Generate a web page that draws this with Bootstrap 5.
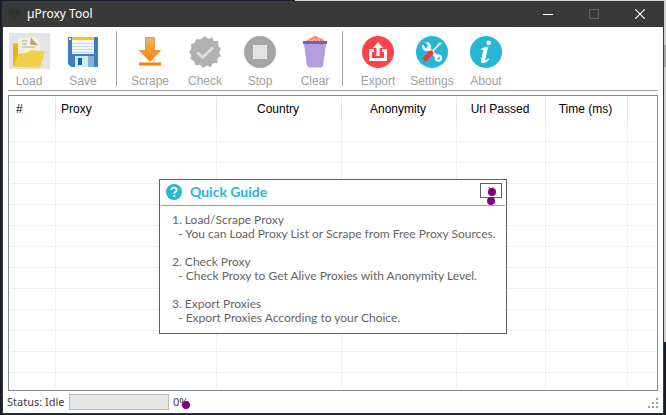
<!DOCTYPE html>
<html lang="en">
<head>
<meta charset="utf-8">
<meta name="viewport" content="width=device-width, initial-scale=1">
<title>µProxy Tool</title>
<link href="https://cdn.jsdelivr.net/npm/bootstrap@5.3.0/dist/css/bootstrap.min.css" rel="stylesheet">
<style>
  body {
    padding: 1px 2px;
    background:
      linear-gradient(90deg, #1a2232 295px, #d3d6d6 295px) top / 100% 1px no-repeat,
      linear-gradient(#d0d0d0 45px, #a8a8a8 45px 67px, #d0d0d0 67px 342px, #18202c 342px) right / 2px 100% no-repeat,
      #18202c;
    font-family: "Liberation Sans", Arial, sans-serif;
    font-size: 12px;
    line-height: 14px;
  }
  .app-window { border: 1px solid #393939; border-top: 0; background: #fff; }
  .title-bar { height: 26px; background: #393939; color: #fff; font-family: "Noto Sans", sans-serif; line-height: 16px; }
  .title-bar .globe { margin: 0 5px 0 4px; }
  .win-btn { width: 46px; height: 26px; border: 0; background: none; }
  .tools { padding-top: 4px; height: 59px; }
  .group-file { padding: 0 8px 0 1px; gap: 4px; }
  .group-run { padding: 0 2px 0 8px; gap: 5px; }
  .group-app { padding-left: 10px; gap: 4px; }
  .tool-btn { width: 50px; padding: 2px 0 0; border: 0; background: none; color: #a0a0a0; }
  .tool-btn .pic { width: 41px; height: 36px; margin-bottom: 5px; padding-top: 2px; }
  .tool-btn .pic.active { background: #e3e3e3; }
  .tool-rule { width: 1px; height: 55px; background: #a0a0a0; }
  .frame { margin: 0 5px; }
  .rule { border-top: 1px solid #a0a0a0; }
  .list-panel { margin-top: 4px; border: 1px solid #828790; padding: 1px; min-height: 0; }
  .clip { height: 100%; overflow: hidden; }
  .proxies { width: 100%; table-layout: fixed; border-collapse: separate; border-spacing: 0; color: #000; }
  .proxies th { height: 24px; padding: 0 7px 0 5px; font-weight: 400; text-align: center; border-right: 1px solid #e5e5e5; }
  .proxies th:first-child { padding-left: 6px; }
  .proxies td { height: 21px; padding: 0; border-right: 1px solid #efefef; border-bottom: 1px solid #efefef; }
  .proxies th:last-child, .proxies td:last-child { border-right: 0; }
  .guide { top: 83px; width: 348px; height: 155px; border: 1px solid #606060; background: #fff; color: #646464; font-family: Lato, sans-serif; }
  .guide header { height: 26px; margin: 0 1px; padding: 0 3px 1px 5px; border-bottom: 1px solid #a0a0a0; }
  .guide h1 { font-size: 14px; line-height: 16px; font-weight: 700; color: #28b6d6; }
  .close-btn { width: 22px; height: 15px; border: 1px solid #606060; background: #fff; margin-bottom: 4px; }
  .steps { padding: 7px 4px 7px 12px; white-space: pre-wrap; }
  .dot { width: 8px; height: 8px; border-radius: 50%; background: #800080; }
  .dot-a { top: 4px; left: 7px; }
  .dot-b { top: 13px; left: 6px; }
  .dot-c { top: 6px; left: 9px; }
  .status { height: 22px; padding: 0 4px; color: #404040; font-family: "Noto Sans", sans-serif; font-size: 11px; }
  .idle { width: 62px; }
  .meter { width: 100px; height: 16px; border: 1px solid #bcbcbc; border-radius: 0; background: #e6e6e6; }
</style>
<script src="https://cdn.jsdelivr.net/npm/bootstrap@5.3.0/dist/js/bootstrap.bundle.min.js"></script>
</head>
<body class="vh-100 m-0 overflow-hidden">
<div class="app-window d-flex flex-column h-100">
  <div class="title-bar d-flex align-items-center">
    <svg class="globe" width="15" height="15" viewBox="0 0 15 15" fill="#323232" stroke="#303030" stroke-width=".6"><circle cx="7.500" cy="7.500" r="6.800" fill="none" stroke-dasharray="2 1"/><path d="M3 3l3-1 1 2-2 1-1 3-2-1zM9 3l3 1 1 3-3 1-2-2zM6 8l3 2-1 4-3-3z"/></svg>
    <span>µProxy Tool</span>
    <div class="ms-auto d-flex">
      <button class="win-btn p-0 d-flex align-items-center justify-content-center" aria-label="Minimize"><svg width="10" height="10"><path d="M0 5.500h10" stroke="#fff"/></svg></button>
      <button class="win-btn p-0 d-flex align-items-center justify-content-center" aria-label="Maximize"><svg width="10" height="10"><path d="M.5.500h9v9h-9z" fill="none" stroke="#666"/></svg></button>
      <button class="win-btn p-0 d-flex align-items-center justify-content-center" aria-label="Close"><svg width="10" height="10"><path d="M.3.300l9.400 9.400M9.700.300L.3 9.700" stroke="#fff" stroke-width="1.200"/></svg></button>
    </div>
  </div>

  <div class="tools d-flex align-items-start">
    <div class="group-file d-flex">
      <button class="tool-btn d-flex flex-column align-items-center"><span class="pic active d-flex align-items-center justify-content-center">
        <svg width="32" height="33" viewBox="0 1 32 33"><path d="M0 8.500h5l2 2h18v21H0z" fill="#ecb211"/><path d="M5 3l17-1 5 5v15H5z" fill="#f4efe2"/><path d="M18 2.500l7 8-8-1z" fill="#b9a171"/><path d="M9 6h5M9 9h5M9 12h13" stroke="#b5aa96" fill="none"/><path d="M5.500 19l9-1.500L18 15l14 1.500-4 13-2 3L0 31.500z" fill="#f0cf4b"/></svg></span>Load</button>
      <button class="tool-btn d-flex flex-column align-items-center"><span class="pic d-flex align-items-center justify-content-center">
        <svg width="30" height="32" viewBox="0 0 30 32"><path d="M0 1h30v30H3l-3-3z" fill="#3f7fbd"/><path d="M4 4h22v14H4z" fill="#f4f6fa"/><path d="M4 1h22v3H4z" fill="#ffc400"/><path d="M4 7.500h22M4 13.500h22" stroke="#e9d9a4"/><path d="M4 10.500h22M4 16.500h22" stroke="#bcd8f2"/><path d="M1 2h2v2H1z" fill="#e8f2ff"/><path d="M7 20h19v11H7z" fill="#cfeaea"/><path d="M20 20h6v11h-6z" fill="#8ab2d4"/><path d="M10 22h4v7h-4z" fill="#1f64a8"/></svg></span>Save</button>
    </div>
    <div class="tool-rule"></div>
    <div class="group-run d-flex">
      <button class="tool-btn d-flex flex-column align-items-center"><span class="pic d-flex align-items-center justify-content-center">
        <svg width="24" height="32" viewBox="0 0 24 32"><defs><linearGradient id="og" x2="0" y2="1"><stop stop-color="#f7b26a"/><stop offset="1" stop-color="#f58200"/></linearGradient></defs><path d="M7.500 1.500h9v13h6L12 25.500 1.500 14.500h6z" fill="url(#og)" stroke="#d98a35" stroke-width=".8"/><path d="M1 26.500h22V29.500H1z" fill="#f58200"/></svg></span>Scrape</button>
      <button class="tool-btn d-flex flex-column align-items-center"><span class="pic d-flex align-items-center justify-content-center">
        <svg width="32" height="32" viewBox="0 0 32 32"><path d="M16 0l3 3 4-1.800 1.800 3.700 4.500.1-.2 4.500L32 13l-2 3.500 2 3.500-3.500 2.500-.2 4.500-4.300.2L21.500 31 17.500 29.500 14 32l-3-3.200-4.500.7-1.300-4.200L1.300 23l1-4L0 16l2.500-3.500L1.600 8.500l4-1.700L7.500 3 11.700 3.400z" fill="#b1b1b1"/><path d="M8.500 16.500l5 5L24 11.500" fill="none" stroke="#dedede" stroke-width="3"/></svg></span>Check</button>
      <button class="tool-btn d-flex flex-column align-items-center"><span class="pic d-flex align-items-center justify-content-center">
        <svg width="32" height="32" viewBox="0 0 32 32"><circle cx="16" cy="16" r="16" fill="#a6a6a6"/><path d="M9 9h14v14H9z" fill="#e2e2e2"/></svg></span>Stop</button>
      <button class="tool-btn d-flex flex-column align-items-center"><span class="pic d-flex align-items-center justify-content-center">
        <svg width="24" height="32" viewBox="0 0 24 32"><path d="M2 6l4-3.500L9 1.500l3-2 4 2.500 3 .5L22 6z" fill="#f28c6a"/><path d="M5 4l2-1M10 3l2 1M15 3.500l2 1M8 5l2-.5M13 5.500l1-2" stroke="#ffd5b5"/><path d="M1 8h22l-3 22-2 1.500H6L4 30z" fill="#b39ddb"/><path d="M0 5h24v3H0z" fill="#7e57c2"/></svg></span>Clear</button>
    </div>
    <div class="tool-rule"></div>
    <div class="group-app d-flex">
      <button class="tool-btn d-flex flex-column align-items-center"><span class="pic d-flex align-items-center justify-content-center">
        <svg width="32" height="32" viewBox="0 0 32 32"><circle cx="16" cy="16" r="16" fill="#fc4349"/><path d="M12 14.500H8.500v9h15v-9H20" fill="none" stroke="#fff" stroke-width="3"/><path d="M16 6l5 6h-3.400v8h-3.200v-8H11z" fill="#fff"/></svg></span>Export</button>
      <button class="tool-btn d-flex flex-column align-items-center"><span class="pic d-flex align-items-center justify-content-center">
        <svg width="32" height="32" viewBox="0 0 32 32"><circle cx="16" cy="16" r="16" fill="#28b6d6"/><path d="M11 11l11 11" stroke="#f5f5f5" stroke-width="3.400"/><circle cx="10.500" cy="10.500" r="3.200" fill="none" stroke="#f5f5f5" stroke-width="2.600"/><path d="M5 7l3-3 3.500 5-2 2z" fill="#28b6d6"/><circle cx="22.500" cy="22" r="2.600" fill="none" stroke="#f5f5f5" stroke-width="2.200"/><path d="M15 17l7.500-8" stroke="#f5f5f5" stroke-width="1.800"/><path d="M21 9l3-3 1.500 1.500-3 3z" fill="#f5f5f5"/><path d="M9.500 22.500L15 17" stroke="#e23c40" stroke-width="5" stroke-linecap="round"/></svg></span>Settings</button>
      <button class="tool-btn d-flex flex-column align-items-center"><span class="pic d-flex align-items-center justify-content-center">
        <svg width="32" height="32" viewBox="0 0 32 32"><circle cx="16" cy="16" r="16" fill="#28b6d6"/><circle cx="18.700" cy="6.700" r="2.300" fill="#fff"/><path d="M11 13c2-1.500 5-2.500 7.500-2.500L15.300 23c-.4 1.800.8 1.600 3.500-.7l.5.900c-2.500 2.800-4.600 3.900-6.400 3.900-2 0-2.500-1.300-1.900-3.600l2.400-9c.3-1-.7-.9-2.200-.6z" fill="#fff"/></svg></span>About</button>
    </div>
  </div>

  <div class="frame flex-grow-1 d-flex flex-column overflow-hidden">
    <div class="rule mt-1"></div>
    <div class="list-panel flex-grow-1 position-relative">
      <div class="clip">
        <table class="proxies">
          <colgroup><col style="width:46px"><col style="width:161px"><col style="width:125px"><col style="width:115px"><col style="width:89px"><col style="width:82px"><col></colgroup>
          <thead><tr><th class="text-start">#</th><th class="text-start">Proxy</th><th>Country</th><th>Anonymity</th><th>Url Passed</th><th>Time (ms)</th><th></th></tr></thead>
          <tbody>
            <tr><td></td><td></td><td></td><td></td><td></td><td></td><td></td></tr>
            <tr><td></td><td></td><td></td><td></td><td></td><td></td><td></td></tr>
            <tr><td></td><td></td><td></td><td></td><td></td><td></td><td></td></tr>
            <tr><td></td><td></td><td></td><td></td><td></td><td></td><td></td></tr>
            <tr><td></td><td></td><td></td><td></td><td></td><td></td><td></td></tr>
            <tr><td></td><td></td><td></td><td></td><td></td><td></td><td></td></tr>
            <tr><td></td><td></td><td></td><td></td><td></td><td></td><td></td></tr>
            <tr><td></td><td></td><td></td><td></td><td></td><td></td><td></td></tr>
            <tr><td></td><td></td><td></td><td></td><td></td><td></td><td></td></tr>
            <tr><td></td><td></td><td></td><td></td><td></td><td></td><td></td></tr>
            <tr><td></td><td></td><td></td><td></td><td></td><td></td><td></td></tr>
            <tr><td></td><td></td><td></td><td></td><td></td><td></td><td></td></tr>
            <tr><td></td><td></td><td></td><td></td><td></td><td></td><td></td></tr>
          </tbody>
        </table>
      </div>
      <section class="guide position-absolute start-50 translate-middle-x">
        <header class="d-flex align-items-center">
          <svg width="16" height="16" viewBox="0 0 16 16"><circle cx="8" cy="8" r="8" fill="#28b6d6"/><path d="M5.300 6c.1-3.200 5.400-3 5.400 0 0 1.800-2.500 1.800-2.500 3.700" fill="none" stroke="#fff" stroke-width="1.700"/><circle cx="8.200" cy="12" r="1.100" fill="#fff"/></svg>
          <h1 class="m-0 ms-2">Quick Guide</h1>
          <button class="close-btn ms-auto p-0 position-relative" aria-label="Close guide"><svg class="d-block mx-auto" width="6" height="8"><path d="M.5 1l5 6M5.500 1l-5 6" stroke="#777"/></svg><span class="dot dot-a position-absolute"></span><span class="dot dot-b position-absolute"></span></button>
        </header>
        <div class="steps">1. Load/Scrape Proxy
  - You can Load Proxy List or Scrape from Free Proxy Sources.

2. Check Proxy
  - Check Proxy to Get Alive Proxies with Anonymity Level.

3. Export Proxies
  - Export Proxies According to your Choice.</div>
      </section>
    </div>
  </div>

  <div class="status d-flex align-items-center">
    <span class="idle">Status: Idle</span>
    <div class="meter progress" role="progressbar" aria-label="Progress" aria-valuenow="0" aria-valuemin="0" aria-valuemax="100"></div>
    <span class="ms-1 position-relative">0%<span class="dot dot-c position-absolute"></span></span>
    <svg class="ms-auto align-self-end mb-1" width="11" height="11" fill="#a0a0a0"><path d="M8 0h2v2H8zM4 4h2v2H4zM8 4h2v2H8zM0 8h2v2H0zM4 8h2v2H4zM8 8h2v2H8z"/></svg>
  </div>
</div>
</body>
</html>
